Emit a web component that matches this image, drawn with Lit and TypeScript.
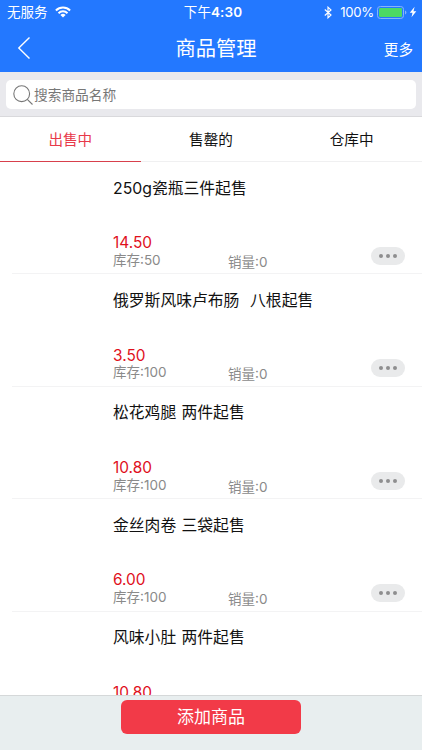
import { LitElement, html, css } from "lit";
import { customElement, property, state } from "lit/decorators.js";
import { classMap } from "lit/directives/class-map.js";

interface Product {
  name: string;
  price: string;
  stock: number;
  sales: number;
}

const PRODUCTS: Product[] = [
  { name: "250g瓷瓶三件起售", price: "14.50", stock: 50, sales: 0 },
  { name: "俄罗斯风味卢布肠  八根起售", price: "3.50", stock: 100, sales: 0 },
  { name: "松花鸡腿 两件起售", price: "10.80", stock: 100, sales: 0 },
  { name: "金丝肉卷 三袋起售", price: "6.00", stock: 100, sales: 0 },
  { name: "风味小肚 两件起售", price: "10.80", stock: 100, sales: 0 },
];

const TABS = ["出售中", "售罄的", "仓库中"];

@customElement("status-bar")
export class StatusBar extends LitElement {
  static styles = css`
    :host {
      display: grid;
      grid-template-columns: 1fr auto 1fr;
      align-items: center;
      height: 23px;
      color: #fff;
      font-size: 13.5px;
      line-height: 24px;
    }
    .left,
    .right {
      display: flex;
      align-items: center;
    }
    .left {
      padding-left: 7px;
      gap: 7px;
    }
    .right {
      justify-content: flex-end;
      padding-right: 5px;
    }
    .time {
      font-weight: 600;
      letter-spacing: 0.1px;
      margin: 0 -2px 0 2px;
    }
    .time .cjk {
      font-weight: 400;
    }
    .bt {
      margin-right: 8px;
    }
    .pct {
      margin-right: 3px;
      font-size: 13.2px;
      letter-spacing: -0.3px;
    }
    .bolt {
      margin-left: 2px;
    }
    svg {
      display: block;
    }
  `;

  render() {
    return html`
      <div class="left">
        <span>无服务</span>
        <svg width="16" height="12" viewBox="0 0 16 12">
          <g fill="none" stroke="#fff" stroke-width="2">
            <path d="M0.9 4.5A10.2 10.2 0 0 1 15.1 4.5" />
            <path d="M3.5 7.2A6.4 6.4 0 0 1 12.5 7.2" />
          </g>
          <path d="M8 11.5L5.4 9A3.7 3.7 0 0 1 10.6 9Z" fill="#fff" />
        </svg>
      </div>
      <div class="time"><span class="cjk">下午</span>4:30</div>
      <div class="right">
        <svg class="bt" width="8" height="13" viewBox="0 0 8 13">
          <path d="M0.8 3.5L7 9L4 11.8V1.2L7 4L0.8 9.5" fill="none" stroke="#fff" stroke-width="1.15" />
        </svg>
        <span class="pct">100%</span>
        <svg width="30" height="13" viewBox="0 0 30 13">
          <rect x="0.5" y="0.5" width="26" height="12" rx="2.8" fill="none" stroke="#86b4fb" />
          <rect x="2" y="2" width="23" height="9" rx="1.2" fill="#4cd964" />
          <path d="M28 4.5Q29.4 5 29.4 6.5T28 8.5Z" fill="#86b4fb" />
        </svg>
        <svg class="bolt" width="8" height="12" viewBox="0 0 8 12">
          <path d="M5.6 0.8L0.8 6.7H3.5L2.5 11.2L7.3 5.2H4.5Z" fill="#fff" />
        </svg>
      </div>
    `;
  }
}

@customElement("product-row")
export class ProductRow extends LitElement {
  @property({ attribute: false }) product!: Product;

  static styles = css`
    :host {
      display: block;
      flex: none;
      height: 112.4px;
      box-sizing: border-box;
      padding-left: 12px;
    }
    .row {
      display: flex;
      height: 100%;
      box-sizing: border-box;
      border-bottom: 1px solid #f3f3f4;
      padding-left: 101px;
    }
    .info {
      flex: 1;
      display: flex;
      flex-direction: column;
    }
    .name {
      margin-top: 14.6px;
      height: 24px;
      line-height: 24px;
      font-size: 15.8px;
      word-spacing: 0.9px;
      white-space: pre;
      color: #111;
    }
    .price {
      margin-top: 32.7px;
      height: 18.5px;
      line-height: 20px;
      font-size: 15.4px;
      color: #e0101c;
    }
    .counts {
      display: flex;
      font-size: 13.5px;
      line-height: 17px;
      color: #8a8a8a;
    }
    .stock {
      width: 115px;
    }
    .sales {
      margin-top: 2px;
    }
    .more {
      display: flex;
      align-items: center;
      justify-content: center;
      gap: 3px;
      width: 34px;
      height: 18px;
      margin: 85px 17px 0 0;
      padding: 0;
      border: 0;
      border-radius: 9px;
      background: #e9eaeb;
    }
    .dot {
      width: 4px;
      height: 4px;
      border-radius: 50%;
      background: #8e8e8f;
    }
  `;

  render() {
    const p = this.product;
    return html`
      <div class="row">
        <div class="info">
          <div class="name">${p.name}</div>
          <div class="price">${p.price}</div>
          <div class="counts">
            <span class="stock">库存:${p.stock}</span>
            <span class="sales">销量:${p.sales}</span>
          </div>
        </div>
        <button class="more" aria-label="更多">
          <span class="dot"></span><span class="dot"></span><span class="dot"></span>
        </button>
      </div>
    `;
  }
}

@customElement("app-root")
export class AppRoot extends LitElement {
  @state() private active = 0;

  static styles = css`
    :host {
      display: flex;
      flex-direction: column;
      height: 100vh;
      overflow: hidden;
      background: #fff;
      font-family: Inter, "Noto Sans CJK SC", sans-serif;
    }
    .header {
      flex: none;
      height: 72px;
      background: #2378ff;
      color: #fff;
    }
    .nav {
      display: grid;
      grid-template-columns: 1fr auto 1fr;
      align-items: center;
      height: 49px;
    }
    .back {
      display: block;
      margin-left: 17px;
    }
    .title {
      font-size: 20.3px;
      line-height: 30px;
      margin: 2px -10px 0 0;
    }
    .action {
      justify-self: end;
      margin: 4px 9px 0 0;
      font-size: 14.6px;
      line-height: 22px;
    }
    .search {
      flex: none;
      box-sizing: border-box;
      height: 45px;
      padding: 8px 6px 7px;
      background: #e9e9ed;
      border-bottom: 1px solid #d9d9dc;
    }
    .field {
      display: flex;
      align-items: center;
      height: 29px;
      padding-left: 7px;
      gap: 1px;
      border-radius: 5px;
      background: #fff;
      color: #777;
      font-size: 13.7px;
      line-height: 29px;
    }
    .field span {
      padding-top: 2px;
    }
    .tabs {
      flex: none;
      display: grid;
      grid-template-columns: repeat(3, 1fr);
      height: 45px;
    }
    .tab {
      box-sizing: border-box;
      height: 45px;
      border-bottom: 1px solid #f0f0f1;
      text-align: center;
      font-size: 14.6px;
      line-height: 47px;
      color: #111;
    }
    .tab.on {
      color: #e8394a;
      border-color: #d8404c;
    }
    .list {
      flex: 1;
      min-height: 0;
      display: flex;
      flex-direction: column;
      overflow: hidden;
    }
    .footer {
      flex: none;
      display: flex;
      justify-content: center;
      align-items: flex-start;
      box-sizing: border-box;
      height: 55px;
      padding-top: 4px;
      border-top: 1px solid #d5d8d9;
      background: #e8eeef;
    }
    .add {
      width: 180px;
      height: 34px;
      padding: 0;
      border: 0;
      border-radius: 6px;
      background: #f23a48;
      color: #fff;
      font: inherit;
      font-size: 17px;
      line-height: 35px;
    }
  `;

  render() {
    return html`
      <div class="header">
        <status-bar></status-bar>
        <div class="nav">
          <svg class="back" width="14" height="24" viewBox="0 0 14 24">
            <path d="M12.5 1.5L1.8 12L12.5 22.5" fill="none" stroke="#fff" stroke-width="1.4" />
          </svg>
          <div class="title">商品管理</div>
          <div class="action">更多</div>
        </div>
      </div>
      <div class="search">
        <div class="field">
          <svg width="20" height="20" viewBox="0 0 20 20">
            <g fill="none" stroke="#777" stroke-width="1.1">
              <circle cx="8.7" cy="8.7" r="7.9" />
              <path d="M14.3 14.3L19.5 19.5" />
            </g>
          </svg>
          <span>搜索商品名称</span>
        </div>
      </div>
      <div class="tabs">
        ${TABS.map(
          (t, i) => html`<div
            class=${classMap({ tab: true, on: i === this.active })}
            @click=${() => (this.active = i)}
          >${t}</div>`
        )}
      </div>
      <div class="list">
        ${PRODUCTS.map((p) => html`<product-row .product=${p}></product-row>`)}
      </div>
      <div class="footer"><button class="add">添加商品</button></div>
    `;
  }
}
